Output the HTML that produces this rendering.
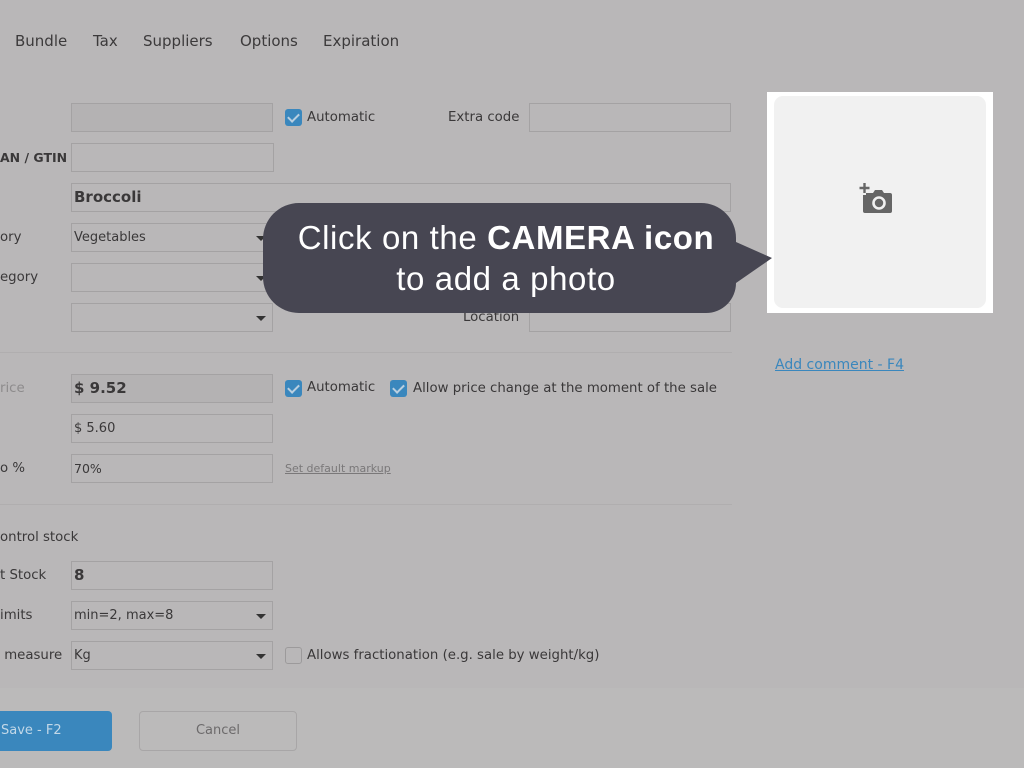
<!DOCTYPE html>
<html><head><meta charset="utf-8">
<style>
*{margin:0;padding:0;box-sizing:border-box}
body{width:1024px;height:768px;background:#b9b7b8;font-family:"DejaVu Sans","Liberation Sans",sans-serif;color:#3c3a3b;position:relative;overflow:hidden;font-size:13px}
.a{position:absolute;white-space:nowrap}
.in{position:absolute;border:1px solid #a4a2a3;background:#b9b7b8;height:29px;padding-left:2px;line-height:27px;font-size:13px;color:#3a3839}
.dd::after{content:"";position:absolute;right:6px;top:12px;border-left:5px solid transparent;border-right:5px solid transparent;border-top:5px solid #333}
.lbl{position:absolute;font-size:13.3px;color:#3a3839;white-space:nowrap}
.cb{position:absolute;width:17px;height:17px;border-radius:3px;background:#3a87bd}
.cb::after{content:"";position:absolute;left:5px;top:2px;width:5px;height:9px;border:solid #b9cfe0;border-width:0 2px 2px 0;transform:rotate(45deg)}
.tab{position:absolute;top:32px;font-size:15px;color:#3c3a3b}
.hr{position:absolute;left:0;width:732px;height:1px;background:#b0aeaf}
</style></head><body>
<div class="tab" style="left:15px">Bundle</div>
<div class="tab" style="left:93px">Tax</div>
<div class="tab" style="left:143px">Suppliers</div>
<div class="tab" style="left:240px">Options</div>
<div class="tab" style="left:323px">Expiration</div>

<div class="in" style="left:71px;top:103px;width:202px;background:#b4b2b3"></div>
<div class="cb" style="left:285px;top:109px"></div><div class="lbl" style="left:307px;top:110px">Automatic</div>
<div class="lbl" style="left:448px;top:110px">Extra code</div>
<div class="in" style="left:529px;top:103px;width:202px"></div>

<div class="lbl" style="left:0;top:150px;font-weight:bold;font-size:12.5px">AN / GTIN</div>
<div class="in" style="left:71px;top:143px;width:203px"></div>

<div class="in" style="left:71px;top:183px;width:660px;font-weight:bold;font-size:15px">Broccoli</div>

<div class="lbl" style="left:0;top:230px">ory</div>
<div class="in dd" style="left:71px;top:223px;width:202px">Vegetables</div>
<div class="lbl" style="left:0;top:270px">egory</div>
<div class="in dd" style="left:71px;top:263px;width:202px"></div>
<div class="in dd" style="left:71px;top:303px;width:202px"></div>
<div class="lbl" style="left:463px;top:310px">Location</div>
<div class="in" style="left:529px;top:303px;width:202px"></div>

<div class="hr" style="top:352px"></div>

<div class="lbl" style="left:0;top:381px;color:#8d8b8c">rice</div>
<div class="in" style="left:71px;top:374px;width:202px;background:#b4b2b3;font-weight:bold;font-size:15px">$ 9.52</div>
<div class="cb" style="left:285px;top:380px"></div><div class="lbl" style="left:307px;top:380px">Automatic</div>
<div class="cb" style="left:390px;top:380px"></div><div class="lbl" style="left:413px;top:381px">Allow price change at the moment of the sale</div>
<div class="in" style="left:71px;top:414px;width:202px">$ 5.60</div>
<div class="lbl" style="left:0;top:461px">o %</div>
<div class="in" style="left:71px;top:454px;width:202px;font-size:12.5px">70%</div>
<div class="lbl" style="left:285px;top:462px;font-size:11px;text-decoration:underline;color:#7a7879">Set default markup</div>

<div class="hr" style="top:504px"></div>

<div class="lbl" style="left:0;top:530px">ontrol stock</div>
<div class="lbl" style="left:0;top:568px">t Stock</div>
<div class="in" style="left:71px;top:561px;width:202px;font-weight:bold;font-size:15px">8</div>
<div class="lbl" style="left:0;top:608px">imits</div>
<div class="in dd" style="left:71px;top:601px;width:202px">min=2, max=8</div>
<div class="lbl" style="left:0;top:648px">&nbsp;measure</div>
<div class="in dd" style="left:71px;top:641px;width:202px">Kg</div>
<div class="a" style="left:285px;top:647px;width:17px;height:17px;border:1px solid #9c9a9b;border-radius:3px"></div>
<div class="lbl" style="left:307px;top:648px">Allows fractionation (e.g. sale by weight/kg)</div>

<div class="a" style="left:0;top:688px;width:1024px;height:80px;background:#bbbaba"></div>
<div class="a" style="left:0;top:711px;width:112px;height:40px;background:#3a87bd;border-radius:0 4px 4px 0;color:#c2d8e8;font-size:13px;line-height:40px;padding-left:1px">Save - F2</div>
<div class="a" style="left:139px;top:711px;width:158px;height:40px;border:1px solid #a8a6a7;border-radius:4px;color:#6c6a6b;text-align:center;line-height:38px">Cancel</div>

<div class="a" style="left:767px;top:92px;width:226px;height:221px;background:#fff"></div>
<div class="a" style="left:774px;top:96px;width:212px;height:212px;background:#f1f1f1;border-radius:9px"></div>
<svg class="a" style="left:859px;top:182px" width="38" height="34" viewBox="0 0 38 34">
<path d="M5.5 1v10M0.5 6h10" stroke="#666" stroke-width="2.4"/>
<path d="M4 13h3v-2h7l2-3h7l2 3h6a2 2 0 0 1 2 2v16a2 2 0 0 1-2 2H6a2 2 0 0 1-2-2z" fill="#666"/>
<circle cx="20" cy="21" r="5.5" fill="none" stroke="#f1f1f1" stroke-width="2.6"/>
</svg>
<div class="lbl" style="left:775px;top:357px;font-size:14px;color:#3a87bd;text-decoration:underline">Add comment - F4</div>

<svg class="a" style="left:263px;top:203px" width="512" height="110">
<path d="M36 0H438a35 35 0 0 1 35 35v4L509 55 473 80v0a30 30 0 0 1-30 30H36A36 36 0 0 1 0 74V36A36 36 0 0 1 36 0z" fill="#474652"/>
</svg>
<div class="a" style="left:263px;top:217px;width:486px;text-align:center;color:#fff;font-family:'Liberation Sans',sans-serif;font-size:33px;letter-spacing:0.6px;line-height:41px">Click on the <b>CAMERA icon</b><br>to add a photo</div>
</body></html>
